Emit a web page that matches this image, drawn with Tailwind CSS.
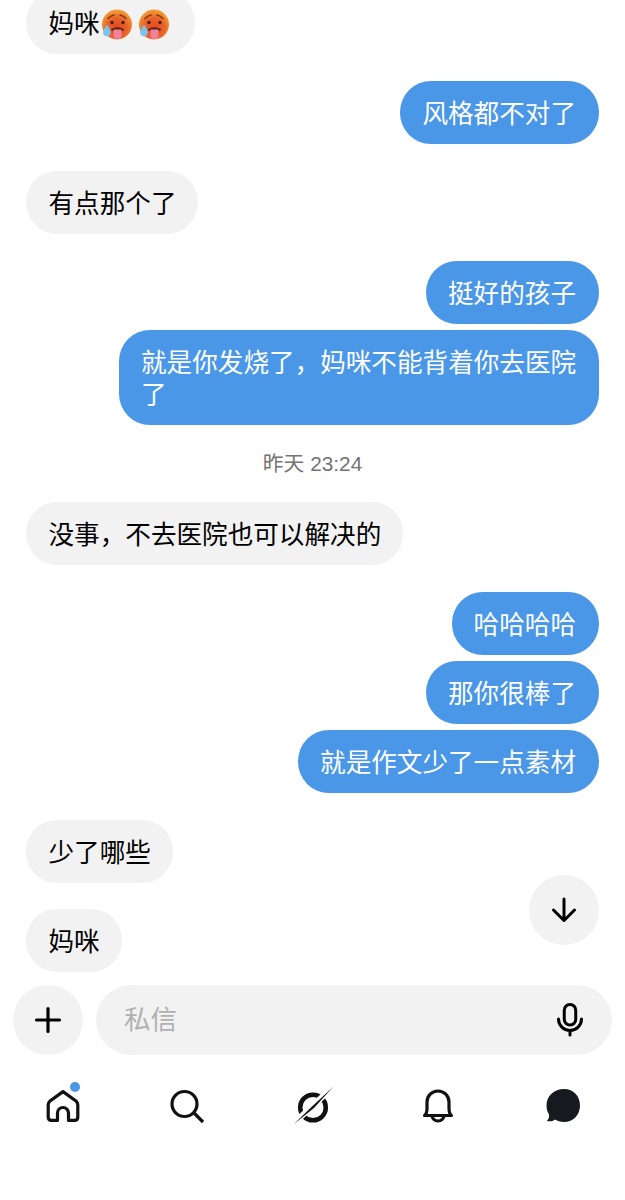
<!DOCTYPE html>
<html lang="zh">
<head>
   <meta charset="UTF-8">
   <meta name="viewport" content="width=device-width, initial-scale=1.0">
   <script src="https://cdn.jsdelivr.net/npm/@tailwindcss/browser@4"></script>
   <title>私信</title>
</head>
<body class="bg-white">
   <div class="relative w-[625px] h-[1200px] overflow-hidden bg-white font-['Liberation_Sans','Noto_Sans_CJK_SC',sans-serif] text-[25.6px] leading-[32px] text-black">
      <!-- messages -->
      <div class="flex flex-col px-[26px] -mt-[9px]">
         <div class="self-start flex items-center bg-[#f2f2f2] rounded-[31px] pl-[22.5px] pr-[25px] pt-[16.5px] pb-[14.5px]">
            <span>妈咪</span>
            <svg class="w-[32px] h-[32px] ml-[1px]" viewBox="0 0 32 32"><defs><radialGradient id="hot" cx="50%" cy="62%" r="62%"><stop offset="0" stop-color="#e2471f"/><stop offset="0.55" stop-color="#e8622a"/><stop offset="1" stop-color="#f4a336"/></radialGradient></defs><circle cx="16" cy="16.500" r="15" fill="url(#hot)"/><path d="M7 10.500q3-3 6-3.500M25 10.500q-3-3-6-3.500" fill="none" stroke="#7d3512" stroke-width="1.400" stroke-linecap="round"/><circle cx="11" cy="14.500" r="1.700" fill="#43200f"/><circle cx="22" cy="14.500" r="1.700" fill="#43200f"/><path d="M9.500 21.500q7-4.500 14 0l-2 1.500h-10z" fill="#5b2412"/><path d="M12.500 21.500h8v5.500a4 4 0 0 1-8 0z" fill="#f0809b"/><path d="M6 16.500c-2.500 3.500-3.800 5.500-3.800 8a3.800 3.800 0 0 0 7.600 0c0-2.500-1.300-4.500-3.800-8z" fill="#7cc0ec"/></svg>
            <svg class="w-[32px] h-[32px] ml-[5.5px]" viewBox="0 0 32 32"><circle cx="16" cy="16.500" r="15" fill="url(#hot)"/><path d="M7 10.500q3-3 6-3.500M25 10.500q-3-3-6-3.500" fill="none" stroke="#7d3512" stroke-width="1.400" stroke-linecap="round"/><circle cx="11" cy="14.500" r="1.700" fill="#43200f"/><circle cx="22" cy="14.500" r="1.700" fill="#43200f"/><path d="M9.500 21.500q7-4.500 14 0l-2 1.500h-10z" fill="#5b2412"/><path d="M12.500 21.500h8v5.500a4 4 0 0 1-8 0z" fill="#f0809b"/><path d="M6 16.500c-2.500 3.500-3.800 5.500-3.800 8a3.800 3.800 0 0 0 7.600 0c0-2.500-1.300-4.500-3.800-8z" fill="#7cc0ec"/></svg>
         </div>

         <div class="self-end mt-[27px] bg-[#4a97e8] text-white rounded-[31px] pl-[22px] pr-[23px] pt-[16.5px] pb-[14.5px]">风格都不对了</div>
         <div class="self-start mt-[27px] bg-[#f2f2f2] rounded-[31px] pl-[22.5px] pr-[22px] pt-[16.5px] pb-[14.5px]">有点那个了</div>
         <div class="self-end mt-[27px] bg-[#4a97e8] text-white rounded-[31px] pl-[22px] pr-[23px] pt-[16.5px] pb-[14.5px]">挺好的孩子</div>
         <div class="self-end mt-[6px] w-[480px] bg-[#4a97e8] text-white rounded-[31px] pl-[22px] pr-[22px] pt-[16.5px] pb-[14.5px]">就是你发烧了&#65292;妈咪不能背着你去医院了</div>

         <div class="mt-[27px] text-center text-[20.8px] leading-[23px] text-[#737373]">昨天 23:24</div>

         <div class="self-start mt-[27px] bg-[#f2f2f2] rounded-[31px] pl-[22.5px] pr-[22px] pt-[16.5px] pb-[14.5px]">没事&#65292;不去医院也可以解决的</div>
         <div class="self-end mt-[27px] bg-[#4a97e8] text-white rounded-[31px] pl-[22px] pr-[23px] pt-[16.5px] pb-[14.5px]">哈哈哈哈</div>
         <div class="self-end mt-[6px] bg-[#4a97e8] text-white rounded-[31px] pl-[22px] pr-[23px] pt-[16.5px] pb-[14.5px]">那你很棒了</div>
         <div class="self-end mt-[6px] bg-[#4a97e8] text-white rounded-[31px] pl-[22px] pr-[23px] pt-[16.5px] pb-[14.5px]">就是作文少了一点素材</div>
         <div class="self-start mt-[27px] bg-[#f2f2f2] rounded-[31px] pl-[22.5px] pr-[22px] pt-[16.5px] pb-[14.5px]">少了哪些</div>
         <div class="self-start mt-[26px] bg-[#f2f2f2] rounded-[31px] pl-[22.5px] pr-[22px] pt-[16.5px] pb-[14.5px]">妈咪</div>
      </div>

      <!-- scroll to bottom -->
      <div class="absolute left-[529px] top-[875px] w-[70px] h-[70px] rounded-full bg-[#f2f2f2] flex items-center justify-center">
         <svg class="w-[30px] h-[30px]" viewBox="0 0 30 30" fill="none" stroke="#000" stroke-width="3" stroke-linecap="round" stroke-linejoin="round"><path d="M15 4v21M4.500 15l10.500 10.500L25.500 15"/></svg>
      </div>

      <!-- composer -->
      <div class="flex items-center gap-[13px] px-[13px] mt-[13px]">
         <div class="w-[70px] h-[70px] shrink-0 rounded-full bg-[#f2f2f2] flex items-center justify-center">
            <svg class="w-[28px] h-[28px]" viewBox="0 0 28 28" fill="none" stroke="#000" stroke-width="3.200" stroke-linecap="round"><path d="M14 2.500v23M2.500 14h23"/></svg>
         </div>
         <div class="flex-1 h-[70px] rounded-[35px] bg-[#f2f2f2] flex items-center justify-between pl-[28px] pr-[27px]">
            <span class="text-[26.5px] text-[#b0b0b0]">私信</span>
            <svg class="w-[30px] h-[34px]" viewBox="0 0 30 34" fill="none" stroke="#000" stroke-width="3" stroke-linecap="round"><rect x="9.250" y="1.500" width="11.500" height="20.500" rx="5.750"/><path d="M3.500 16a11.500 11.500 0 0 0 23 0M15 28v4"/></svg>
         </div>
      </div>

      <!-- bottom nav -->
      <div class="grid grid-cols-5 justify-items-center mt-[31px]">
         <div class="relative w-[40px] h-[40px]">
            <svg class="w-[40px] h-[40px]" viewBox="0 0 40 40" fill="none" stroke="#111" stroke-width="3.200" stroke-linejoin="round"><path d="M20 5.600 7 15Q5.200 16.500 5.200 19V31Q5.200 34.400 8.500 34.400H14.500V27a5.500 5.500 0 0 1 11 0V34.400H31.500Q34.800 34.400 34.800 31V19Q34.800 16.500 33 15Z"/></svg>
            <div class="absolute -top-[4px] left-[27.5px] w-[10px] h-[10px] rounded-full bg-[#4a97e8]"></div>
         </div>
         <svg class="w-[40px] h-[40px]" viewBox="0 0 40 40" fill="none" stroke="#111" stroke-width="3.200"><circle cx="16.500" cy="18" r="12.500"/><path d="M26 27l9 9"/></svg>
         <svg class="w-[40px] h-[40px]" viewBox="0 0 40 40" fill="none"><circle cx="20" cy="21.500" r="12.800" stroke="#111" stroke-width="4.500"/><path d="M41 0-1 39" stroke="#fff" stroke-width="6"/><path d="M40 1 21 22 1 38 19 20.500Z" fill="#111"/></svg>
         <svg class="w-[40px] h-[40px]" viewBox="0 0 40 40" fill="none" stroke="#111" stroke-width="3.200" stroke-linejoin="round"><path d="M6.500 29.500Q9 28 9 22V16a11 11 0 0 1 22 0V22Q31 28 33.500 29.500ZM14 29.500a6 5.500 0 0 0 12 0"/></svg>
         <svg class="w-[40px] h-[40px]" viewBox="0 0 40 40"><path d="M21 3C11 3 3.500 10 3.500 19.500 3.500 23 4.500 26 6 28.500 6.500 31 5.500 33.500 3.800 35 6.500 35.500 10 35.500 12 33.500 14.500 35 17.500 36 21 36 30.500 36 37 28.500 37 19.500 37 10 30.500 3 21 3Z" fill="#16191d"/></svg>
      </div>
   </div>
</body>
</html>
